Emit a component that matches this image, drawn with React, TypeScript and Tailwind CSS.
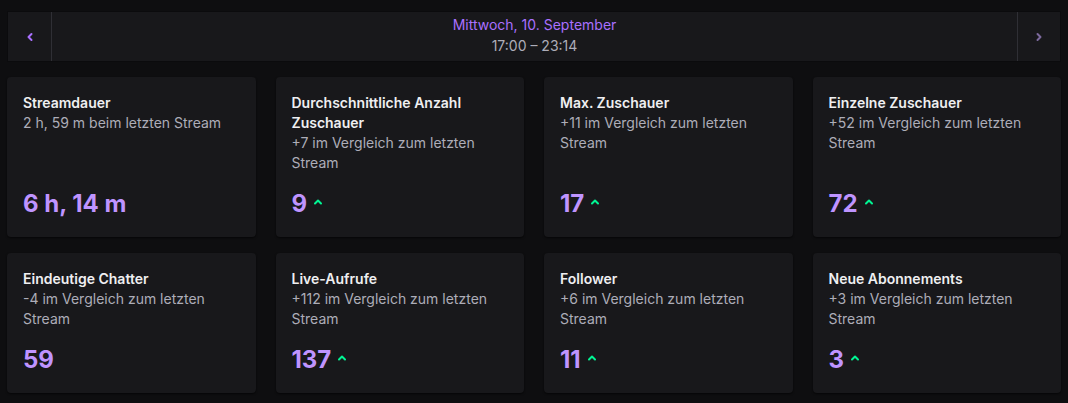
import React from "react";

const cards = [
  { title: "Streamdauer", sub: "2 h, 59 m beim letzten Stream", value: "6 h, 14 m", up: false },
  { title: "Durchschnittliche Anzahl Zuschauer", sub: "+7 im Vergleich zum letzten Stream", value: "9", up: true },
  { title: "Max. Zuschauer", sub: "+11 im Vergleich zum letzten Stream", value: "17", up: true },
  { title: "Einzelne Zuschauer", sub: "+52 im Vergleich zum letzten Stream", value: "72", up: true },
  { title: "Eindeutige Chatter", sub: "-4 im Vergleich zum letzten Stream", value: "59", up: false },
  { title: "Live-Aufrufe", sub: "+112 im Vergleich zum letzten Stream", value: "137", up: true },
  { title: "Follower", sub: "+6 im Vergleich zum letzten Stream", value: "11", up: true },
  { title: "Neue Abonnements", sub: "+3 im Vergleich zum letzten Stream", value: "3", up: true },
];

function Up() {
  return (
    <svg width="10" height="8" viewBox="0 0 10 8" className="ml-[6px] mt-[-4px]">
      <path d="M2 5.5 L5 2.5 L8 5.5" stroke="#00f593" strokeWidth="2" fill="none" strokeLinecap="round" strokeLinejoin="round" />
    </svg>
  );
}

function Chevron({ dir, color }: { dir: "l" | "r"; color: string }) {
  return (
    <svg width="8" height="10" viewBox="0 0 8 10">
      <path d={dir === "l" ? "M5.5 2 L2.5 5 L5.5 8" : "M2.5 2 L5.5 5 L2.5 8"} stroke={color} strokeWidth="2" fill="none" strokeLinecap="round" strokeLinejoin="round" />
    </svg>
  );
}

export default function App() {
  return (
    <div className="w-[1068px] h-[403px] bg-[#0e0e10] px-[7px] pt-[11px] overflow-hidden" style={{ fontFamily: "Inter, 'Noto Sans', sans-serif" }}>
      <div className="flex h-[51px] bg-[#18181b] border border-[#0b0b0d]">
        <div className="w-[44px] flex items-center justify-center border-r border-[#2f2f35]">
          <Chevron dir="l" color="#a970ff" />
        </div>
        <div className="flex-1 flex flex-col items-center pt-[2px] text-[14px] leading-[21px]">
          <div className="text-[#a970ff]">Mittwoch, 10. September</div>
          <div className="text-[#adadb8]">17:00 – 23:14</div>
        </div>
        <div className="w-[43px] flex items-center justify-center border-l border-[#2f2f35]">
          <Chevron dir="r" color="#7d6a9e" />
        </div>
      </div>
      <div className="grid grid-cols-4 gap-x-5 gap-y-4 mt-[15px]">
        {cards.map((c) => (
          <div key={c.title} className="bg-[#18181b] rounded-[4px] px-4 pt-4 pb-[17px] flex flex-col shadow-[0_1px_2px_rgba(0,0,0,0.6)]">
            <div className="text-[14px] leading-[20px] font-semibold text-[#efeff1]">{c.title}</div>
            <div className="text-[14px] leading-[20px] text-[#adadb8]">{c.sub}</div>
            <div className="mt-auto pt-[15px] flex items-center">
              <span className="text-[24px] leading-[32px] font-bold text-[#bf94ff]">{c.value}</span>
              {c.up && <Up />}
            </div>
          </div>
        ))}
      </div>
    </div>
  );
}
